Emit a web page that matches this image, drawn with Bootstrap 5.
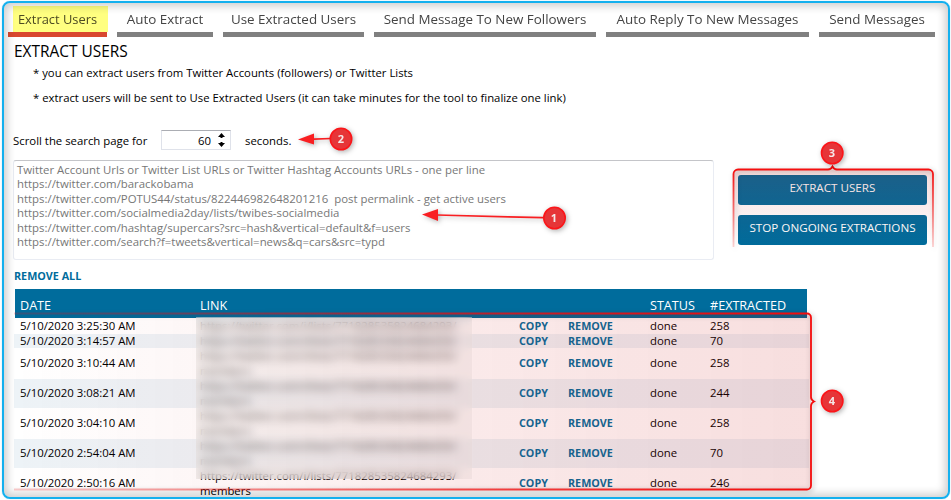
<!DOCTYPE html>
<html lang="en">
<head>
<meta charset="utf-8">
<title>Extract Users</title>
<link href="https://cdn.jsdelivr.net/npm/bootstrap@5.3.0/dist/css/bootstrap.min.css" rel="stylesheet">
<style>
  body { width: 951px; height: 500px; overflow: hidden; background: #fff; color: #000; font: 11.36px/15px "Open Sans", "Noto Sans", sans-serif; }
  .frame { width: 951px; height: 500px; padding: 6px 0 0 8px; }
  .frame-line { left: 2px; top: 1px; width: 948px; height: 498px; border: 2px solid #14b0ee; border-radius: 8px; box-shadow: inset 0 0 9px 3px rgba(0,0,0,.2), 0 0 1px #6cc8f0; pointer-events: none; }
  .tabs { gap: 10px; height: 31px; }
  .tab { height: 31px; border-bottom: 5px solid #808080; color: #444; font-size: 13.4px; line-height: 26px; text-align: center; white-space: nowrap; }
  .tab-on { border-color: #d9482f; font-size: 12.9px; color: #4c4a22; }
  .tab-glow { left: 13px; top: 6px; width: 95px; height: 26px; background: #ffff80; z-index: 0; }
  .tab span { position: relative; z-index: 1; }
  .title { font-size: 15.45px; line-height: 20px; margin: 4px 0 0 6px; font-weight: 400; }
  .note { margin-left: 25px; line-height: 20px; white-space: nowrap; font-size: 11.33px; }
  .spin { width: 70px; height: 20px; border: 1px solid #dfe2ea; border-top-color: #abadb3; padding-right: 4px; }
  .urls { width: 701px; height: 100px; border: 1px solid #e9ecf3; border-top-color: #c4c5c9; border-radius: 3px; padding: 2px 0 0 3px; color: #777; font-size: 11.4px; line-height: 14.4px; white-space: pre; }
  .act { width: 189px; height: 30px; border-radius: 3px; background: #006c9c; color: #fff; font-size: 11.65px; line-height: 24px; padding: 0 0 4px; border: 0; }
  .cmd { color: #006c9c; font-size: 10.78px; font-weight: 700; text-decoration: none; }
  .grid-head { width: 792px; height: 29px; margin-left: 7px; background: #006c9c; color: #fff; font-size: 12.6px; padding-top: 4px; }
  .grid-row { width: 795px; margin-left: 6px; padding-bottom: 2px; }
  .even { background: #edf3f7; }
  .c-date { width: 180px; padding-left: 6px; } .c-link { width: 325px; padding-left: 6px; white-space: pre; }
  .c-copy { width: 49px; } .c-rem { width: 82px; } .c-stat { width: 60px; }
  .grid-row:last-child .c-link { padding-top: 2px; }
  .smear { left: 196px; top: 317px; width: 276px; height: 162px; backdrop-filter: blur(5px); background: rgba(228,228,226,.35); }
  .marks { left: 0; top: 0; pointer-events: none; }
  .num { font: 700 11px "Open Sans", sans-serif; fill: #f5e9e9; text-anchor: middle; }
</style>
<script src="https://cdn.jsdelivr.net/npm/bootstrap@5.3.0/dist/js/bootstrap.bundle.min.js"></script>
</head>
<body>
<div class="frame position-relative overflow-hidden">
  <div class="tab-glow position-absolute"></div>
  <nav class="tabs d-flex">
    <div class="tab tab-on position-relative" style="width:99px"><span>Extract Users</span></div>
    <div class="tab" style="width:96px"><span>Auto Extract</span></div>
    <div class="tab" style="width:141px"><span>Use Extracted Users</span></div>
    <div class="tab" style="width:222px"><span>Send Message To New Followers</span></div>
    <div class="tab" style="width:203px"><span>Auto Reply To New Messages</span></div>
    <div class="tab" style="width:116px"><span>Send Messages</span></div>
  </nav>
  <h1 class="title mb-0">EXTRACT USERS</h1>
  <div class="note" style="margin-top:2px">* you can extract users from Twitter Accounts (followers) or Twitter Lists</div>
  <div class="note" style="margin-top:5px">* extract users will be sent to Use Extracted Users (it can take minutes for the tool to finalize one link)</div>
  <div class="d-flex align-items-center" style="margin:22px 0 0 5px;height:20px">
    <span style="width:148px">Scroll the search page for</span>
    <div class="spin d-flex align-items-center justify-content-end" style="gap:6px"><span>60</span>
      <svg width="9" height="14" viewBox="0 0 9 14"><path d="M4.5 0 8 4H5.5v1h-2V4H1zM4.500 14 8 10H5.500V9h-2v1H1z"/></svg></div>
    <span style="margin-left:14px">seconds.</span>
  </div>
  <div class="d-flex" style="margin:10px 0 0 5px;height:100px">
    <div class="urls">Twitter Account Urls or Twitter List URLs or Twitter Hashtag Accounts URLs - one per line
https://twitter.com/barackobama
https://twitter.com/POTUS44/status/822446982648201216  post permalink - get active users
https://twitter.com/socialmedia2day/lists/twibes-socialmedia
https://twitter.com/hashtag/supercars?src=hash&amp;vertical=default&amp;f=users
https://twitter.com/search?f=tweets&amp;vertical=news&amp;q=cars&amp;src=typd</div>
    <div class="d-flex flex-column" style="gap:10px;margin:15px 0 0 24px">
      <button class="act" type="button">EXTRACT USERS</button>
      <button class="act" type="button">STOP ONGOING EXTRACTIONS</button>
    </div>
  </div>
  <div style="height:29px;padding:8px 0 0 6px"><a class="cmd">REMOVE ALL</a></div>
  <div class="grid-head d-flex align-items-center">
    <div style="width:180px;padding-left:5px">DATE</div><div style="width:449px;padding-left:5px;margin-right:6px">LINK</div><div style="width:60px">STATUS</div><div>#EXTRACTED</div>
  </div>
  <div id="rows"></div>
  <div class="smear position-absolute"></div>
  <div class="frame-line position-absolute"></div>
  <svg class="marks position-absolute" width="951" height="500" viewBox="0 0 951 500">
    <defs>
      <linearGradient id="fadeX"><stop offset="0" stop-color="#d02020" stop-opacity="0"/><stop offset=".6" stop-color="#d02020" stop-opacity=".1"/><stop offset="1" stop-color="#c81414" stop-opacity=".14"/></linearGradient>
      <linearGradient id="lineX" gradientUnits="userSpaceOnUse" x1="14" y1="0" x2="814" y2="0"><stop offset="0" stop-color="#f40c0c" stop-opacity=".2"/><stop offset=".65" stop-color="#f40c0c" stop-opacity=".8"/><stop offset="1" stop-color="#f40c0c"/></linearGradient>
      <linearGradient id="fadeY" x1="0" y1="0" x2="0" y2="1"><stop offset="0" stop-color="#c01818" stop-opacity=".15"/><stop offset="1" stop-color="#c81414" stop-opacity="0"/></linearGradient>
      <linearGradient id="lineY" gradientUnits="userSpaceOnUse" x1="0" y1="168" x2="0" y2="250"><stop offset="0" stop-color="#f40c0c"/><stop offset="1" stop-color="#f40c0c" stop-opacity=".15"/></linearGradient>
      <filter id="soft" color-interpolation-filters="sRGB" x="-20%" y="-20%" width="150%" height="150%"><feDropShadow dx="1.500" dy="1.500" stdDeviation="2.500" flood-color="#000" flood-opacity=".3"/></filter>
    </defs>
    <path d="M14 313.500H807a4 4 0 0 1 4 4V485.500a4 4 0 0 1-4 4H14z" fill="url(#fadeX)"/>
    <g filter="url(#soft)"><path d="M14 313.500H807a4 4 0 0 1 4 4V397q0 3 3 4.500q-3 1.500-3 4.500V485.500a4 4 0 0 1-4 4H14" fill="none" stroke="url(#lineX)" stroke-width="1.800"/></g>
    <path d="M733.500 247V174a4.500 4.500 0 0 1 4.500-4.500H928.500a4.500 4.500 0 0 1 4.500 4.500V247z" fill="url(#fadeY)"/>
    <g filter="url(#soft)"><path d="M733.500 247V174a4.500 4.500 0 0 1 4.500-4.500H828q3 0 4.500-3q1.500 3 4.500 3H928.500a4.500 4.500 0 0 1 4.500 4.500V247" fill="none" stroke="url(#lineY)" stroke-width="1.800"/></g>
    <g filter="url(#soft)" stroke="#f91f22" stroke-width="1.700" fill="#f91f22">
      <path d="M314 139.200 331 138.500"/><path d="M298 139.500 314 133.500V144.500z" stroke="none"/>
      <path d="M437 215 543 217.700"/><path d="M422 214.500 438 209V221z" stroke="none"/>
    </g>
    <g filter="url(#soft)" fill="#e63538" stroke="#fb1519" stroke-width="1.600">
      <circle cx="554.500" cy="218" r="10.700"/><circle cx="341" cy="139" r="10.700"/><circle cx="832.200" cy="153" r="10.700"/><circle cx="832.200" cy="401" r="10.700"/>
    </g>
    <text class="num" x="554" y="222">1</text><text class="num" x="341" y="143">2</text><text class="num" x="832" y="157">3</text><text class="num" x="832" y="405">4</text>
  </svg>
</div>
<script>
  const link = 'https://twitter.com/i/lists/771828535824684293/';
  const rows = [
    ['3:25:30', 'done', 258, 16, 1], ['3:14:57', 'done', 70, 14, 1], ['3:10:44', 'done', 258, 31, 2],
    ['3:08:21', 'done', 244, 29, 2], ['3:04:10', 'done', 258, 31, 2], ['2:54:04', 'done', 70, 29, 2], ['2:50:16', 'done', 246, 30, 2]
  ];
  document.getElementById('rows').innerHTML = rows.map(([t, s, n, h, l], i) =>
    `<div class="grid-row d-flex align-items-center ${i % 2 ? 'even' : ''}" style="height:${h}px">
      <div class="c-date">5/10/2020 ${t} AM</div><div class="c-link">${link}${l > 1 ? '\nmembers' : ''}</div>
      <div class="c-copy"><a class="cmd">COPY</a></div><div class="c-rem"><a class="cmd">REMOVE</a></div>
      <div class="c-stat">${s}</div><div>${n}</div></div>`).join('');
</script>
</body>
</html>
